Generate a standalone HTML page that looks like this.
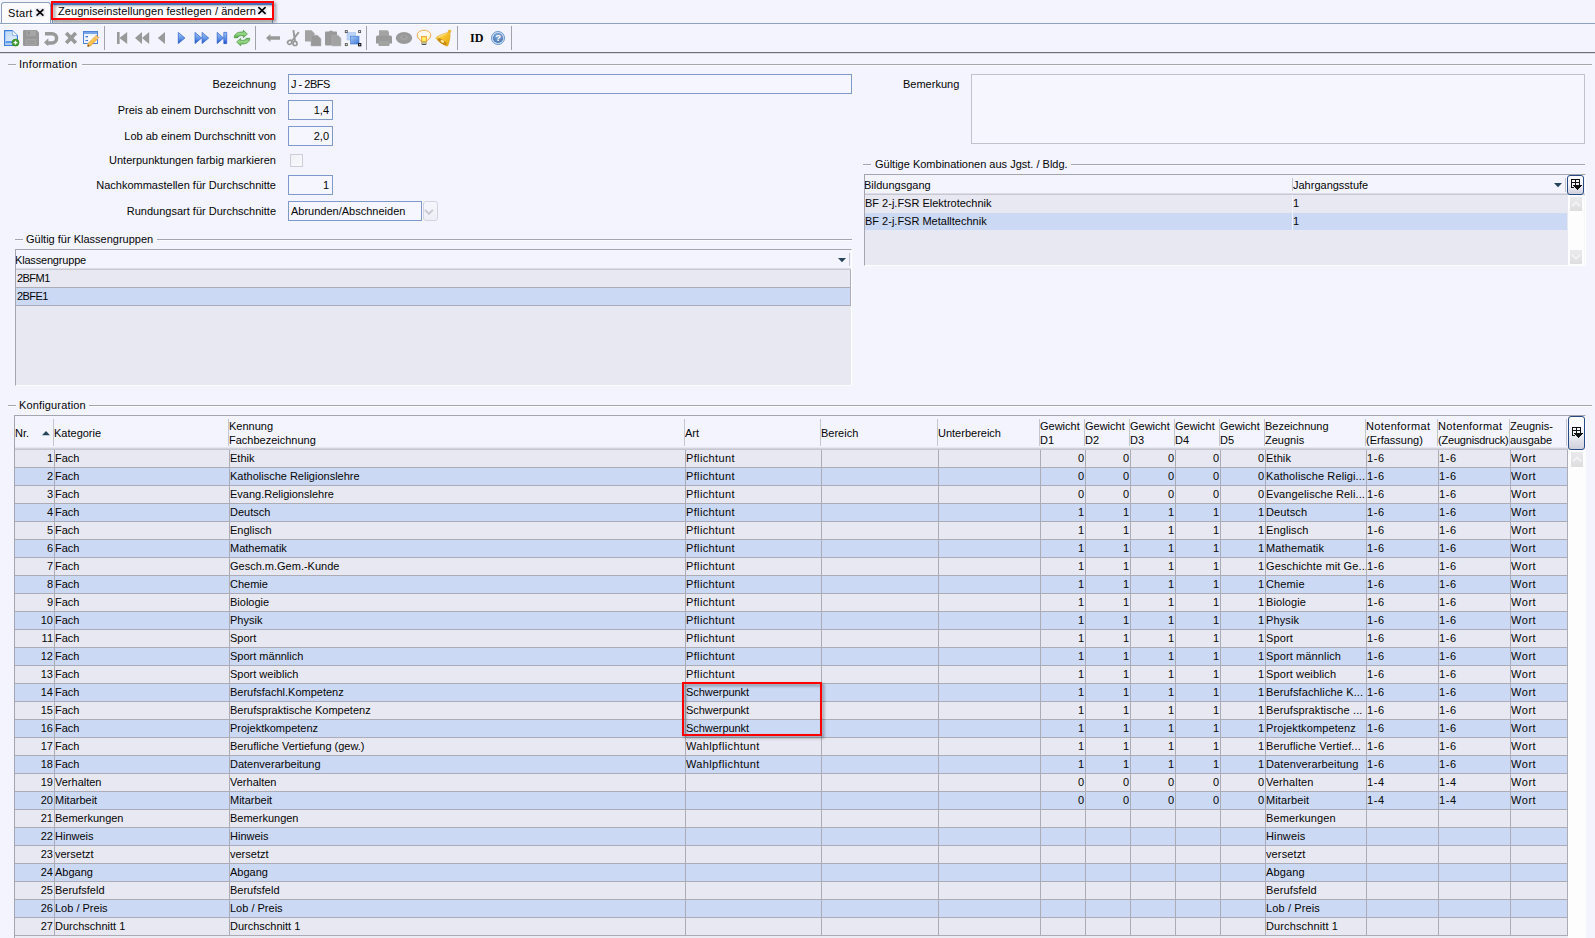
<!DOCTYPE html>
<html><head><meta charset="utf-8"><title>Zeugniseinstellungen</title>
<style>
*{box-sizing:border-box;margin:0;padding:0}
html,body{width:1595px;height:938px;overflow:hidden}
body{background:#f3f4fe;font-family:"Liberation Sans",sans-serif;font-size:11px;color:#050505;position:relative}
i{font-style:normal}
u{text-decoration:none;letter-spacing:.35px}
s{text-decoration:none;letter-spacing:-.2px}
.abs{position:absolute}
.t{position:absolute;white-space:nowrap;line-height:13px;height:13px}
.lbl{position:absolute;white-space:nowrap;line-height:13px;height:13px;text-align:right;right:1319px}
.hl{position:absolute;height:1px;background:#a4a5ae;box-shadow:0 1px 0 #fbfbff}
.inp{position:absolute;border:1px solid #7f99c8;background:#f5f6ff;height:20px;line-height:19px;padding:0 2px;white-space:nowrap}
.inp.ra{text-align:right;padding-right:3px}
/* grids */
.grid{position:absolute;background:#e8e8f2;border-left:1px solid #a4a5ae;border-top:1px solid #a4a5ae;border-right:1px solid #fdfdff;border-bottom:1px solid #fdfdff;overflow:hidden}
.r{position:absolute;left:0;height:18px;width:1552px;border-bottom:1px solid #acacb6}
.r.g{background:#e8e8f2}
.r.b{background:#ccd9f5}
.c{position:absolute;top:0;height:17px;line-height:16px;padding-left:0;border-left:1px solid #acacb6;white-space:nowrap;overflow:hidden}
.c:first-child{border-left:none}
.c.n{text-align:right;padding-right:1px;padding-left:0}
.hdr{position:absolute;left:0;top:0;background:#f3f4fe}
.h{position:absolute;top:0;height:33px;line-height:35px;padding-left:1px;white-space:nowrap;overflow:hidden}
.h.two{line-height:14px;padding-top:3px}
.h:before{content:"";position:absolute;left:0;top:3px;bottom:3px;width:1px;background:#c4c6d0}
.h:first-child:before{display:none}
.cbtn{position:absolute;width:17px;border:1px solid #274a85;border-radius:3px;background:linear-gradient(#ffffff 0,#f4f4fa 45%,#d0d0dc 100%)}
.sbt{position:absolute;width:12px;background:linear-gradient(#eaeaee,#dededf)}
.trk{position:absolute;background:#fdfdfe}
</style></head><body>

<!-- TABS -->
<div class="abs" style="left:0;top:23px;width:1595px;height:1px;background:#8fa3c3"></div>
<div class="abs" style="left:0;top:24px;width:520px;height:1px;background:#fcfcff"></div>
<div class="abs" style="left:1px;top:2px;width:50px;height:21px;border:1px solid #8c9fbd;border-bottom:none;border-radius:3px 3px 0 0;background:#fbfbff"></div>
<div class="t" style="left:8px;top:7px;letter-spacing:.3px">Start</div>
<svg class="abs" style="left:35px;top:8px" width="10" height="9" viewBox="0 0 10 9"><rect x="0" y="0" width="10" height="9" fill="#ececf4"/><path d="M1.6 1.4L8.4 7.6M8.4 1.4L1.6 7.6" stroke="#050505" stroke-width="1.7"/></svg>
<!-- active tab -->
<div class="abs" style="left:52px;top:3px;width:221px;height:20px;border-left:1px solid #8098b8;border-right:1px solid #8098b8;background:linear-gradient(#5c8ff0 0,#5c8ff0 2px,#dedee0 2px,#efeff1 3px,#f9f9fb 4px,#fdfdff 6px,#fdfdff 16px,#e2e8e8 17px,#e4e6e6 20px)"></div>
<div class="abs" style="left:51px;top:1px;width:223px;height:19px;border:2px solid #ff0000;filter:drop-shadow(2px 2px 1.5px rgba(0,0,0,.45))"></div>
<div class="t" style="left:58px;top:5px;letter-spacing:.07px">Zeugniseinstellungen festlegen / ändern</div>
<svg class="abs" style="left:257px;top:6px" width="10" height="9" viewBox="0 0 10 9"><rect x="0" y="0" width="10" height="9" fill="#f0f0f6"/><path d="M1.4 1.2L8.6 7.8M8.6 1.2L1.4 7.8" stroke="#050505" stroke-width="1.7"/></svg>

<!-- TOOLBAR -->
<div class="abs" style="left:0;top:52px;width:1595px;height:1px;background:#6e6e74"></div>
<div class="abs" style="left:0;top:53px;width:1595px;height:1px;background:#d9dae4"></div>
<!--TB--><svg class="abs" style="left:0;top:24px" width="530" height="28" viewBox="0 24 530 28">
<defs>
<linearGradient id="gb" x1="0" y1="0" x2="0" y2="1"><stop offset="0" stop-color="#a8c8f4"/><stop offset=".6" stop-color="#5a90e4"/><stop offset="1" stop-color="#1a44c0"/></linearGradient>
<linearGradient id="gdoc" x1="0" y1="0" x2="1" y2="1"><stop offset="0" stop-color="#b9d6f7"/><stop offset="1" stop-color="#f2f7fe"/></linearGradient>
<linearGradient id="ggr" x1="0" y1="0" x2="0" y2="1"><stop offset="0" stop-color="#6ab85a"/><stop offset=".5" stop-color="#9ad88c"/><stop offset="1" stop-color="#4aa03c"/></linearGradient>
<linearGradient id="gsq" x1="0" y1="0" x2="1" y2="1"><stop offset="0" stop-color="#a9c8f5"/><stop offset="1" stop-color="#3f78d8"/></linearGradient>
<radialGradient id="gbulb" cx=".5" cy=".35" r=".65"><stop offset="0" stop-color="#ffffff"/><stop offset=".6" stop-color="#fffbe0"/><stop offset="1" stop-color="#ffe9a8"/></radialGradient>
<linearGradient id="gbell" x1="0" y1="0" x2="1" y2="1"><stop offset="0" stop-color="#ffe27a"/><stop offset=".5" stop-color="#f6c02a"/><stop offset="1" stop-color="#e0a010"/></linearGradient>
<radialGradient id="ghelp" cx=".5" cy=".3" r=".75"><stop offset="0" stop-color="#8eb0da"/><stop offset="1" stop-color="#416fae"/></radialGradient>
<linearGradient id="gpen" x1="0" y1="0" x2="1" y2="1"><stop offset="0" stop-color="#ffe680"/><stop offset="1" stop-color="#f0a020"/></linearGradient>
</defs>
<!-- separators -->
<g fill="#a2a2aa"><rect x="104" y="26" width="1" height="24"/><rect x="255" y="26" width="1" height="24"/><rect x="366" y="26" width="1" height="24"/><rect x="457" y="26" width="1" height="24"/><rect x="511" y="26" width="1" height="24"/></g>
<!-- 1 new doc -->
<path d="M4.6 30.6H12.4L17.4 35.6V45.4H4.6Z" fill="url(#gdoc)" stroke="#3d7fdb" stroke-width="1.2" stroke-linejoin="round"/>
<path d="M12.4 30.6V35.6H17.4" fill="#fff" stroke="#6f9fe6" stroke-width=".7"/>
<rect x="5.6" y="41" width="10" height="2.4" fill="#5a9ae6"/>
<circle cx="15.5" cy="42.6" r="3.5" fill="#46a030" stroke="#2f7a20" stroke-width=".6"/>
<path d="M13.6 42.6H17.4M15.5 40.7V44.5" stroke="#fff" stroke-width="1.3"/>
<!-- 2 save -->
<path d="M24 30H36.5L39 32.5V45Q39 46 38 46H24Q23 46 23 45V31Q23 30 24 30Z" fill="#979797"/>
<rect x="26.5" y="30.5" width="9.5" height="5.5" fill="#a6a6a6"/><rect x="28.3" y="31.5" width="1.2" height="3.2" fill="#858585"/>
<rect x="25.5" y="39" width="11" height="6.5" fill="#a3a3a3"/><path d="M27 41.2H35M27 43.4H35" stroke="#939393" stroke-width=".8"/>
<!-- 3 undo -->
<path d="M45 33.7H52A4.5 4.5 0 0 1 52 42.9H47.5" fill="none" stroke="#999" stroke-width="3.5"/>
<path d="M44 42.6L48.3 38.2V46.2Z" fill="#999"/>
<!-- 4 X -->
<path d="M66.2 32.9L75.8 43M75.8 32.9L66.2 43" stroke="#999" stroke-width="3.7"/>
<!-- 5 form edit -->
<rect x="83.5" y="31.5" width="14" height="12" fill="#eef2fb" stroke="#4f84d6"/>
<rect x="84" y="32" width="13" height="2" fill="#79a6e8"/>
<rect x="88.5" y="36" width="8" height="6.5" fill="#fff"/>
<path d="M85.5 36.7H88M85.5 40.5H88" stroke="#3f78d8" stroke-width="1.2"/>
<path d="M96.3 35.2L98.8 37.7L90.7 45.8L87.6 46.4L88.2 43.3Z" fill="url(#gpen)" stroke="#d98a20" stroke-width=".6"/>
<path d="M87.6 46.4L88 44.6L89.4 46Z" fill="#5a3a10"/>
<path d="M95.2 36.3L97.7 38.8" stroke="#f6c9a0" stroke-width="1.2"/>
<!-- nav -->
<g fill="#999"><rect x="117" y="32" width="2.6" height="12"/><path d="M127.2 32V44L119.4 38Z"/>
<path d="M142 32V44L135 38Z"/><path d="M149.2 32V44L142 38Z"/>
<path d="M165 32V44L157.8 38Z"/></g>
<g fill="url(#gb)" stroke="#2a5fd0" stroke-width=".7" stroke-linejoin="round"><path d="M178.3 32.4V43.6L184.9 38Z"/>
<path d="M195 32.4V43.6L201.6 38Z"/><path d="M202.1 32.4V43.6L208.7 38Z"/>
<path d="M217.2 32.4V43.6L223.6 38Z"/><rect x="223.8" y="32.4" width="2.9" height="11.2"/></g>
<!-- refresh -->
<path d="M234.2 37.7C234.2 33.5 238 31.7 243.3 31.9L243.3 30.2L247.4 34L243.3 37.8L243.3 35.7C240 35.5 238.2 36.1 237.8 37.7Z" fill="url(#ggr)" stroke="#3a8c30" stroke-width=".6" stroke-linejoin="round"/>
<path d="M249.8 38.3C249.8 42.5 246 44.3 240.7 44.1L240.7 45.8L236.6 42L240.7 38.2L240.7 40.3C244 40.5 245.8 39.9 246.2 38.3Z" fill="url(#ggr)" stroke="#3a8c30" stroke-width=".6" stroke-linejoin="round"/>
<!-- left arrow -->
<path d="M266 38L270.4 34V36.2H280V39.8H270.4V42Z" fill="#999"/>
<!-- scissors -->
<path d="M293.4 30.2L295 41M298.8 32.2L291.5 41.5" stroke="#999" stroke-width="1.9" fill="none"/>
<ellipse cx="289.7" cy="42.3" rx="2.2" ry="1.9" fill="none" stroke="#999" stroke-width="1.7" transform="rotate(-30 289.7 42.3)"/>
<ellipse cx="295" cy="43.4" rx="2" ry="2.1" fill="none" stroke="#999" stroke-width="1.7"/>
<!-- copy -->
<path d="M305 30.3H311.5L314.5 33.3V41.5H305Z" fill="#a2a2a2"/>
<path d="M311 35.2H317.5L321 38.7V46H311Z" fill="#999" stroke="#b0b0b0" stroke-width=".5"/>
<!-- paste -->
<path d="M326 31.5H329Q330.8 29.5 333 31.5H336Q337 31.5 337 32.5V44.5Q337 45.5 336 45.5H326Q325 45.5 325 44.5V32.5Q325 31.5 326 31.5Z" fill="#999"/>
<path d="M332 35.2H338L341 38.2V46H332Z" fill="#a2a2a2" stroke="#b4b4b4" stroke-width=".5"/>
<!-- select all -->
<rect x="347" y="32.5" width="8.5" height="7.5" fill="#bcd3f7" stroke="#a5c2f0" stroke-width=".6"/>
<rect x="350.5" y="36.2" width="8.5" height="7.8" fill="url(#gsq)" stroke="#3f78d8" stroke-width=".6"/>
<g fill="#f3f4fe" stroke="#555" stroke-width=".9"><rect x="345.3" y="30.6" width="2" height="2"/><rect x="358.6" y="30.6" width="2" height="2"/><rect x="345.3" y="43.6" width="2" height="2"/></g>
<rect x="358.6" y="43.6" width="2.2" height="2.2" fill="#fff" stroke="#111" stroke-width="1.1"/>
<!-- printer -->
<path d="M379 30.3H387.5L389 32V36H379Z" fill="#a4a4a4"/>
<path d="M377.5 35.5H390.5Q392 35.5 392 37.5V43.5H376V37.5Q376 35.5 377.5 35.5Z" fill="#999"/>
<rect x="378.5" y="41" width="11" height="5" rx=".8" fill="#a2a2a2"/>
<!-- ellipse -->
<ellipse cx="404" cy="38" rx="8.2" ry="6" fill="#999"/><ellipse cx="404" cy="37.6" rx="4" ry="2.6" fill="#a3a3a3"/><circle cx="404" cy="37" r=".9" fill="#8a8a8a"/>
<!-- bulb -->
<path d="M421 41.2C420.6 39.8 417.2 38.7 417.2 35.3C417.2 32.2 420.2 30.3 424 30.3C427.8 30.3 430.8 32.2 430.8 35.3C430.8 38.7 427.4 39.8 427 41.2Z" fill="url(#gbulb)" stroke="#eda048" stroke-width=".9"/>
<rect x="421.6" y="36.6" width="4.8" height="4.8" fill="#ffde40" stroke="#f08c28" stroke-width=".7"/>
<rect x="422.6" y="37.6" width="2.8" height="3.4" fill="#fff06a"/>
<path d="M421.3 41.6H426.7V43.6Q426.7 45 424 45Q421.3 45 421.3 43.6Z" fill="#8e8e8e"/>
<rect x="421.3" y="41.6" width="5.4" height="1" fill="#f4d23a"/>
<rect x="422.2" y="43" width="3.6" height=".8" fill="#e6e6e6"/>
<path d="M421.8 44.4H426.2" stroke="#3a3a3a" stroke-width=".9"/>
<!-- bell -->
<path d="M448.7 32.4C446 32.6 440.5 34.6 437.2 36.6C435.8 37.4 435.7 38.4 436.6 39.2L440.5 42.6L445.8 45.8C447 46.4 448 46 448.3 44.8C449.2 41.6 450.6 36.5 450 33.4Z" fill="url(#gbell)" stroke="#d89a12" stroke-width=".5"/>
<circle cx="449.6" cy="31.4" r="1.35" fill="#f4bc24" stroke="#d89a12" stroke-width=".5"/>
<ellipse cx="442" cy="41.6" rx="5.4" ry="1.9" transform="rotate(36 442 41.6)" fill="#c98c12"/>
<ellipse cx="442.4" cy="41.3" rx="1.9" ry="1.2" transform="rotate(36 442.4 41.3)" fill="#ffe8a0"/>
<path d="M438.5 36.8L446.5 33.4" stroke="#fff3b8" stroke-width=".8" opacity=".8"/>
<!-- ID -->
<text x="470" y="42.3" font-family="Liberation Serif" font-weight="bold" font-size="12.5" fill="#050505" textLength="13.5" lengthAdjust="spacingAndGlyphs">ID</text>
<!-- help -->
<circle cx="498" cy="38" r="6.5" fill="#cfe0f6" stroke="#6a96d0" stroke-width="1"/>
<circle cx="498" cy="38" r="5.1" fill="url(#ghelp)"/>
<text x="498.1" y="41.3" font-family="Liberation Sans" font-weight="bold" font-size="9.6" fill="#fff" text-anchor="middle">?</text>
</svg>
<!--/TB-->

<!-- INFORMATION group -->
<div class="hl" style="left:8px;top:64px;width:8px"></div>
<div class="t" style="left:19px;top:58px;letter-spacing:.3px">Information</div>
<div class="hl" style="left:82px;top:64px;width:1510px"></div>

<div class="lbl" style="top:78px">Bezeichnung</div>
<div class="inp" style="left:288px;top:74px;width:564px;letter-spacing:-.5px">J - 2BFS</div>
<div class="lbl" style="top:104px">Preis ab einem Durchschnitt von</div>
<div class="inp ra" style="left:288px;top:100px;width:45px">1,4</div>
<div class="lbl" style="top:130px">Lob ab einem Durchschnitt von</div>
<div class="inp ra" style="left:288px;top:126px;width:45px">2,0</div>
<div class="lbl" style="top:154px">Unterpunktungen farbig markieren</div>
<div class="abs" style="left:290px;top:154px;width:13px;height:13px;border:1px solid #cdced8;background:linear-gradient(135deg,#f1f1f5,#f9f9fd)"></div>
<div class="lbl" style="top:179px">Nachkommastellen für Durchschnitte</div>
<div class="inp ra" style="left:288px;top:175px;width:45px">1</div>
<div class="lbl" style="top:205px">Rundungsart für Durchschnitte</div>
<div class="inp" style="left:288px;top:201px;width:134px">Abrunden/Abschneiden</div>
<div class="abs" style="left:423px;top:201px;width:15px;height:20px;border:1px solid #d3d4df;border-radius:3px;background:linear-gradient(#f6f6fc,#eeeef6)"></div>
<svg class="abs" style="left:424px;top:209px" width="10" height="7" viewBox="0 0 10 7"><path d="M.9 .9L4.9 5L8.9 .9" stroke="#c6c8d2" stroke-width="1.9" fill="none"/></svg>

<!-- Bemerkung -->
<div class="t" style="left:903px;top:78px">Bemerkung</div>
<div class="abs" style="left:971px;top:74px;width:614px;height:70px;border:1px solid #c0c2cd;background:#f5f6ff"></div>

<!-- Gültig für Klassengruppen -->
<div class="hl" style="left:15px;top:239px;width:8px"></div>
<div class="t" style="left:26px;top:233px">Gültig für Klassengruppen</div>
<div class="hl" style="left:157px;top:239px;width:695px"></div>
<div class="grid" style="left:15px;top:249px;width:837px;height:137px">
  <div class="hdr" style="width:836px;height:20px;background:linear-gradient(#f3f4fe 0,#f3f4fe 18px,#dcdce6 18px,#dcdce6 19px,#c8c8d2 19px,#c8c8d2 20px)"><i class="h" style="left:-1px;width:300px;height:18px;line-height:21px;padding-left:0;letter-spacing:-.18px">Klassengruppe</i></div>
  <div class="r g" style="top:20px;width:835px;border-right:1px solid #acacb6"><i class="c" style="left:0;width:300px;padding-left:1px;letter-spacing:-.55px">2BFM1</i></div>
  <div class="r b" style="top:38px;width:835px;border-right:1px solid #acacb6"><i class="c" style="left:0;width:300px;padding-left:1px;letter-spacing:-.55px">2BFE1</i></div>
</div>
<svg class="abs" style="left:838px;top:258px" width="8" height="5" viewBox="0 0 8 5"><path d="M0 0H8L4 4.3Z" fill="#27455a"/></svg>
<div class="abs" style="left:849px;top:253px;width:1px;height:13px;background:#c4c6d0"></div>

<!-- Gültige Kombinationen -->
<div class="hl" style="left:863px;top:164px;width:8px"></div>
<div class="t" style="left:875px;top:158px">Gültige Kombinationen aus Jgst. / Bldg.</div>
<div class="hl" style="left:1071px;top:164px;width:514px"></div>
<div class="grid" style="left:864px;top:174px;width:722px;height:92px">
  <div class="hdr" style="width:721px;height:20px;background:linear-gradient(#f3f4fe 0,#f3f4fe 18px,#dcdce6 18px,#dcdce6 19px,#c8c8d2 19px,#c8c8d2 20px)">
    <i class="h" style="left:-1px;width:427px;height:19px;line-height:20px;padding-left:0">Bildungsgang</i>
    <i class="h" style="left:427px;width:270px;height:19px;line-height:20px;padding-left:1px">Jahrgangsstufe</i>
  </div>
  <div class="r g" style="top:20px;width:702px;border-bottom-color:#e8e8f2"><i class="c" style="left:0;width:427px;border:none">BF 2-j.FSR Elektrotechnik</i><i class="c" style="left:427px;width:275px;border-left-color:#f3f4fe">1</i></div>
  <div class="r b" style="top:38px;width:702px;border-bottom-color:#e8e8f2"><i class="c" style="left:0;width:427px;border:none">BF 2-j.FSR Metalltechnik</i><i class="c" style="left:427px;width:275px;border-left-color:#f3f4fe">1</i></div>
  <div class="abs" style="left:703px;top:21px;width:18px;height:70px;background:#f6f6fc"></div>
</div>
<svg class="abs" style="left:1554px;top:183px" width="8" height="5" viewBox="0 0 8 5"><path d="M0 0H8L4 4.3Z" fill="#27455a"/></svg>
<div class="abs" style="left:1565px;top:178px;width:1px;height:14px;background:#c4c6d0"></div>
<div class="trk" style="left:1568px;top:195px;width:16px;height:70px"></div><div class="cbtn" style="left:1567px;top:175px;height:20px"></div><svg class="abs" style="left:1571px;top:179px" width="11" height="11" viewBox="0 0 11 11" shape-rendering="crispEdges"><g fill="#111"><rect x="0" y="0" width="9" height="1"/><rect x="0" y="0" width="1" height="9"/><rect x="8" y="0" width="1" height="6"/><rect x="0" y="3" width="9" height="1"/><rect x="4" y="0" width="1" height="6"/><rect x="0" y="8" width="3" height="1"/><rect x="2" y="6" width="9" height="1"/><rect x="3" y="7" width="7" height="1"/><rect x="4" y="8" width="5" height="1"/><rect x="5" y="9" width="3" height="1"/><rect x="6" y="10" width="1" height="1"/></g></svg><div class="sbt" style="left:1570px;top:197px;height:14px"></div><svg class="abs" style="left:1571px;top:201px" width="10" height="6" viewBox="0 0 10 6"><path d="M1 5.2L5 1.4L9 5.2" fill="none" stroke="#f4f4f6" stroke-width="1.8"/></svg><div class="sbt" style="left:1570px;top:250px;height:14px"></div><svg class="abs" style="left:1571px;top:254px" width="10" height="6" viewBox="0 0 10 6"><path d="M1 .8L5 4.6L9 .8" fill="none" stroke="#f4f4f6" stroke-width="1.8"/></svg>

<!-- KONFIGURATION -->
<div class="hl" style="left:8px;top:405px;width:8px"></div>
<div class="t" style="left:19px;top:399px;letter-spacing:.15px">Konfiguration</div>
<div class="hl" style="left:89px;top:405px;width:1503px"></div>
<div class="grid" style="left:14px;top:415px;width:1572px;height:530px">
  <div class="hdr" style="width:1553px;height:34px;border-bottom:none;background:linear-gradient(#f3f4fe 0,#f3f4fe 31px,#e6e6f0 31px,#e6e6f0 32px,#d2d2dc 32px,#d2d2dc 33px,#c6c6d0 33px,#c6c6d0 34px)"><i class="h" style="left:0px;width:38px;padding-left:0">Nr.</i><i class="h" style="left:38px;width:175px">Kategorie</i><i class="h two" style="left:213px;width:456px">Kennung<br>Fachbezeichnung</i><i class="h" style="left:669px;width:136px">Art</i><i class="h" style="left:805px;width:117px">Bereich</i><i class="h" style="left:922px;width:102px">Unterbereich</i><i class="h two" style="left:1024px;width:45px">Gewicht<br>D1</i><i class="h two" style="left:1069px;width:45px">Gewicht<br>D2</i><i class="h two" style="left:1114px;width:45px">Gewicht<br>D3</i><i class="h two" style="left:1159px;width:45px">Gewicht<br>D4</i><i class="h two" style="left:1204px;width:45px">Gewicht<br>D5</i><i class="h two" style="left:1249px;width:101px">Bezeichnung<br>Zeugnis</i><i class="h two" style="left:1350px;width:72px"><u>Notenformat</u><br>(Erfassung)</i><i class="h two" style="left:1422px;width:72px"><u>Notenformat</u><br><s>(Zeugnisdruck)</s></i><i class="h two" style="left:1494px;width:57px">Zeugnis-<br>ausgabe</i></div>
  <div class="abs" style="left:1554px;top:0;width:18px;height:530px;background:#f6f6fc"></div>
</div>
<div class="abs" style="left:15px;top:0;width:1552px;height:938px;overflow:hidden;pointer-events:none">
<div class="r g" style="top:450px"><i class="c n" style="left:0px;width:39px">1</i><i class="c" style="left:39px;width:175px">Fach</i><i class="c" style="left:214px;width:456px">Ethik</i><i class="c" style="left:670px;width:136px;letter-spacing:0.36px">Pflichtunt</i><i class="c" style="left:806px;width:117px"></i><i class="c" style="left:923px;width:102px"></i><i class="c n" style="left:1025px;width:45px">0</i><i class="c n" style="left:1070px;width:45px">0</i><i class="c n" style="left:1115px;width:45px">0</i><i class="c n" style="left:1160px;width:45px">0</i><i class="c n" style="left:1205px;width:45px">0</i><i class="c" style="left:1250px;width:101px;letter-spacing:0.12px">Ethik</i><i class="c" style="left:1351px;width:72px;letter-spacing:0.55px">1-6</i><i class="c" style="left:1423px;width:72px;letter-spacing:0.55px">1-6</i><i class="c" style="left:1495px;width:57px;letter-spacing:0.55px">Wort</i></div>
<div class="r b" style="top:468px"><i class="c n" style="left:0px;width:39px">2</i><i class="c" style="left:39px;width:175px">Fach</i><i class="c" style="left:214px;width:456px">Katholische Religionslehre</i><i class="c" style="left:670px;width:136px;letter-spacing:0.36px">Pflichtunt</i><i class="c" style="left:806px;width:117px"></i><i class="c" style="left:923px;width:102px"></i><i class="c n" style="left:1025px;width:45px">0</i><i class="c n" style="left:1070px;width:45px">0</i><i class="c n" style="left:1115px;width:45px">0</i><i class="c n" style="left:1160px;width:45px">0</i><i class="c n" style="left:1205px;width:45px">0</i><i class="c" style="left:1250px;width:101px;letter-spacing:0.12px">Katholische Religi...</i><i class="c" style="left:1351px;width:72px;letter-spacing:0.55px">1-6</i><i class="c" style="left:1423px;width:72px;letter-spacing:0.55px">1-6</i><i class="c" style="left:1495px;width:57px;letter-spacing:0.55px">Wort</i></div>
<div class="r g" style="top:486px"><i class="c n" style="left:0px;width:39px">3</i><i class="c" style="left:39px;width:175px">Fach</i><i class="c" style="left:214px;width:456px">Evang.Religionslehre</i><i class="c" style="left:670px;width:136px;letter-spacing:0.36px">Pflichtunt</i><i class="c" style="left:806px;width:117px"></i><i class="c" style="left:923px;width:102px"></i><i class="c n" style="left:1025px;width:45px">0</i><i class="c n" style="left:1070px;width:45px">0</i><i class="c n" style="left:1115px;width:45px">0</i><i class="c n" style="left:1160px;width:45px">0</i><i class="c n" style="left:1205px;width:45px">0</i><i class="c" style="left:1250px;width:101px;letter-spacing:0.12px">Evangelische Reli...</i><i class="c" style="left:1351px;width:72px;letter-spacing:0.55px">1-6</i><i class="c" style="left:1423px;width:72px;letter-spacing:0.55px">1-6</i><i class="c" style="left:1495px;width:57px;letter-spacing:0.55px">Wort</i></div>
<div class="r b" style="top:504px"><i class="c n" style="left:0px;width:39px">4</i><i class="c" style="left:39px;width:175px">Fach</i><i class="c" style="left:214px;width:456px">Deutsch</i><i class="c" style="left:670px;width:136px;letter-spacing:0.36px">Pflichtunt</i><i class="c" style="left:806px;width:117px"></i><i class="c" style="left:923px;width:102px"></i><i class="c n" style="left:1025px;width:45px">1</i><i class="c n" style="left:1070px;width:45px">1</i><i class="c n" style="left:1115px;width:45px">1</i><i class="c n" style="left:1160px;width:45px">1</i><i class="c n" style="left:1205px;width:45px">1</i><i class="c" style="left:1250px;width:101px;letter-spacing:0.12px">Deutsch</i><i class="c" style="left:1351px;width:72px;letter-spacing:0.55px">1-6</i><i class="c" style="left:1423px;width:72px;letter-spacing:0.55px">1-6</i><i class="c" style="left:1495px;width:57px;letter-spacing:0.55px">Wort</i></div>
<div class="r g" style="top:522px"><i class="c n" style="left:0px;width:39px">5</i><i class="c" style="left:39px;width:175px">Fach</i><i class="c" style="left:214px;width:456px">Englisch</i><i class="c" style="left:670px;width:136px;letter-spacing:0.36px">Pflichtunt</i><i class="c" style="left:806px;width:117px"></i><i class="c" style="left:923px;width:102px"></i><i class="c n" style="left:1025px;width:45px">1</i><i class="c n" style="left:1070px;width:45px">1</i><i class="c n" style="left:1115px;width:45px">1</i><i class="c n" style="left:1160px;width:45px">1</i><i class="c n" style="left:1205px;width:45px">1</i><i class="c" style="left:1250px;width:101px;letter-spacing:0.12px">Englisch</i><i class="c" style="left:1351px;width:72px;letter-spacing:0.55px">1-6</i><i class="c" style="left:1423px;width:72px;letter-spacing:0.55px">1-6</i><i class="c" style="left:1495px;width:57px;letter-spacing:0.55px">Wort</i></div>
<div class="r b" style="top:540px"><i class="c n" style="left:0px;width:39px">6</i><i class="c" style="left:39px;width:175px">Fach</i><i class="c" style="left:214px;width:456px">Mathematik</i><i class="c" style="left:670px;width:136px;letter-spacing:0.36px">Pflichtunt</i><i class="c" style="left:806px;width:117px"></i><i class="c" style="left:923px;width:102px"></i><i class="c n" style="left:1025px;width:45px">1</i><i class="c n" style="left:1070px;width:45px">1</i><i class="c n" style="left:1115px;width:45px">1</i><i class="c n" style="left:1160px;width:45px">1</i><i class="c n" style="left:1205px;width:45px">1</i><i class="c" style="left:1250px;width:101px;letter-spacing:0.12px">Mathematik</i><i class="c" style="left:1351px;width:72px;letter-spacing:0.55px">1-6</i><i class="c" style="left:1423px;width:72px;letter-spacing:0.55px">1-6</i><i class="c" style="left:1495px;width:57px;letter-spacing:0.55px">Wort</i></div>
<div class="r g" style="top:558px"><i class="c n" style="left:0px;width:39px">7</i><i class="c" style="left:39px;width:175px">Fach</i><i class="c" style="left:214px;width:456px">Gesch.m.Gem.-Kunde</i><i class="c" style="left:670px;width:136px;letter-spacing:0.36px">Pflichtunt</i><i class="c" style="left:806px;width:117px"></i><i class="c" style="left:923px;width:102px"></i><i class="c n" style="left:1025px;width:45px">1</i><i class="c n" style="left:1070px;width:45px">1</i><i class="c n" style="left:1115px;width:45px">1</i><i class="c n" style="left:1160px;width:45px">1</i><i class="c n" style="left:1205px;width:45px">1</i><i class="c" style="left:1250px;width:101px;letter-spacing:0.12px">Geschichte mit Ge...</i><i class="c" style="left:1351px;width:72px;letter-spacing:0.55px">1-6</i><i class="c" style="left:1423px;width:72px;letter-spacing:0.55px">1-6</i><i class="c" style="left:1495px;width:57px;letter-spacing:0.55px">Wort</i></div>
<div class="r b" style="top:576px"><i class="c n" style="left:0px;width:39px">8</i><i class="c" style="left:39px;width:175px">Fach</i><i class="c" style="left:214px;width:456px">Chemie</i><i class="c" style="left:670px;width:136px;letter-spacing:0.36px">Pflichtunt</i><i class="c" style="left:806px;width:117px"></i><i class="c" style="left:923px;width:102px"></i><i class="c n" style="left:1025px;width:45px">1</i><i class="c n" style="left:1070px;width:45px">1</i><i class="c n" style="left:1115px;width:45px">1</i><i class="c n" style="left:1160px;width:45px">1</i><i class="c n" style="left:1205px;width:45px">1</i><i class="c" style="left:1250px;width:101px;letter-spacing:0.12px">Chemie</i><i class="c" style="left:1351px;width:72px;letter-spacing:0.55px">1-6</i><i class="c" style="left:1423px;width:72px;letter-spacing:0.55px">1-6</i><i class="c" style="left:1495px;width:57px;letter-spacing:0.55px">Wort</i></div>
<div class="r g" style="top:594px"><i class="c n" style="left:0px;width:39px">9</i><i class="c" style="left:39px;width:175px">Fach</i><i class="c" style="left:214px;width:456px">Biologie</i><i class="c" style="left:670px;width:136px;letter-spacing:0.36px">Pflichtunt</i><i class="c" style="left:806px;width:117px"></i><i class="c" style="left:923px;width:102px"></i><i class="c n" style="left:1025px;width:45px">1</i><i class="c n" style="left:1070px;width:45px">1</i><i class="c n" style="left:1115px;width:45px">1</i><i class="c n" style="left:1160px;width:45px">1</i><i class="c n" style="left:1205px;width:45px">1</i><i class="c" style="left:1250px;width:101px;letter-spacing:0.12px">Biologie</i><i class="c" style="left:1351px;width:72px;letter-spacing:0.55px">1-6</i><i class="c" style="left:1423px;width:72px;letter-spacing:0.55px">1-6</i><i class="c" style="left:1495px;width:57px;letter-spacing:0.55px">Wort</i></div>
<div class="r b" style="top:612px"><i class="c n" style="left:0px;width:39px">10</i><i class="c" style="left:39px;width:175px">Fach</i><i class="c" style="left:214px;width:456px">Physik</i><i class="c" style="left:670px;width:136px;letter-spacing:0.36px">Pflichtunt</i><i class="c" style="left:806px;width:117px"></i><i class="c" style="left:923px;width:102px"></i><i class="c n" style="left:1025px;width:45px">1</i><i class="c n" style="left:1070px;width:45px">1</i><i class="c n" style="left:1115px;width:45px">1</i><i class="c n" style="left:1160px;width:45px">1</i><i class="c n" style="left:1205px;width:45px">1</i><i class="c" style="left:1250px;width:101px;letter-spacing:0.12px">Physik</i><i class="c" style="left:1351px;width:72px;letter-spacing:0.55px">1-6</i><i class="c" style="left:1423px;width:72px;letter-spacing:0.55px">1-6</i><i class="c" style="left:1495px;width:57px;letter-spacing:0.55px">Wort</i></div>
<div class="r g" style="top:630px"><i class="c n" style="left:0px;width:39px">11</i><i class="c" style="left:39px;width:175px">Fach</i><i class="c" style="left:214px;width:456px">Sport</i><i class="c" style="left:670px;width:136px;letter-spacing:0.36px">Pflichtunt</i><i class="c" style="left:806px;width:117px"></i><i class="c" style="left:923px;width:102px"></i><i class="c n" style="left:1025px;width:45px">1</i><i class="c n" style="left:1070px;width:45px">1</i><i class="c n" style="left:1115px;width:45px">1</i><i class="c n" style="left:1160px;width:45px">1</i><i class="c n" style="left:1205px;width:45px">1</i><i class="c" style="left:1250px;width:101px;letter-spacing:0.12px">Sport</i><i class="c" style="left:1351px;width:72px;letter-spacing:0.55px">1-6</i><i class="c" style="left:1423px;width:72px;letter-spacing:0.55px">1-6</i><i class="c" style="left:1495px;width:57px;letter-spacing:0.55px">Wort</i></div>
<div class="r b" style="top:648px"><i class="c n" style="left:0px;width:39px">12</i><i class="c" style="left:39px;width:175px">Fach</i><i class="c" style="left:214px;width:456px">Sport männlich</i><i class="c" style="left:670px;width:136px;letter-spacing:0.36px">Pflichtunt</i><i class="c" style="left:806px;width:117px"></i><i class="c" style="left:923px;width:102px"></i><i class="c n" style="left:1025px;width:45px">1</i><i class="c n" style="left:1070px;width:45px">1</i><i class="c n" style="left:1115px;width:45px">1</i><i class="c n" style="left:1160px;width:45px">1</i><i class="c n" style="left:1205px;width:45px">1</i><i class="c" style="left:1250px;width:101px;letter-spacing:0.12px">Sport männlich</i><i class="c" style="left:1351px;width:72px;letter-spacing:0.55px">1-6</i><i class="c" style="left:1423px;width:72px;letter-spacing:0.55px">1-6</i><i class="c" style="left:1495px;width:57px;letter-spacing:0.55px">Wort</i></div>
<div class="r g" style="top:666px"><i class="c n" style="left:0px;width:39px">13</i><i class="c" style="left:39px;width:175px">Fach</i><i class="c" style="left:214px;width:456px">Sport weiblich</i><i class="c" style="left:670px;width:136px;letter-spacing:0.36px">Pflichtunt</i><i class="c" style="left:806px;width:117px"></i><i class="c" style="left:923px;width:102px"></i><i class="c n" style="left:1025px;width:45px">1</i><i class="c n" style="left:1070px;width:45px">1</i><i class="c n" style="left:1115px;width:45px">1</i><i class="c n" style="left:1160px;width:45px">1</i><i class="c n" style="left:1205px;width:45px">1</i><i class="c" style="left:1250px;width:101px;letter-spacing:0.12px">Sport weiblich</i><i class="c" style="left:1351px;width:72px;letter-spacing:0.55px">1-6</i><i class="c" style="left:1423px;width:72px;letter-spacing:0.55px">1-6</i><i class="c" style="left:1495px;width:57px;letter-spacing:0.55px">Wort</i></div>
<div class="r b" style="top:684px"><i class="c n" style="left:0px;width:39px">14</i><i class="c" style="left:39px;width:175px">Fach</i><i class="c" style="left:214px;width:456px">Berufsfachl.Kompetenz</i><i class="c" style="left:670px;width:136px;letter-spacing:-0.05px">Schwerpunkt</i><i class="c" style="left:806px;width:117px"></i><i class="c" style="left:923px;width:102px"></i><i class="c n" style="left:1025px;width:45px">1</i><i class="c n" style="left:1070px;width:45px">1</i><i class="c n" style="left:1115px;width:45px">1</i><i class="c n" style="left:1160px;width:45px">1</i><i class="c n" style="left:1205px;width:45px">1</i><i class="c" style="left:1250px;width:101px;letter-spacing:0.12px">Berufsfachliche K...</i><i class="c" style="left:1351px;width:72px;letter-spacing:0.55px">1-6</i><i class="c" style="left:1423px;width:72px;letter-spacing:0.55px">1-6</i><i class="c" style="left:1495px;width:57px;letter-spacing:0.55px">Wort</i></div>
<div class="r g" style="top:702px"><i class="c n" style="left:0px;width:39px">15</i><i class="c" style="left:39px;width:175px">Fach</i><i class="c" style="left:214px;width:456px">Berufspraktische Kompetenz</i><i class="c" style="left:670px;width:136px;letter-spacing:-0.05px">Schwerpunkt</i><i class="c" style="left:806px;width:117px"></i><i class="c" style="left:923px;width:102px"></i><i class="c n" style="left:1025px;width:45px">1</i><i class="c n" style="left:1070px;width:45px">1</i><i class="c n" style="left:1115px;width:45px">1</i><i class="c n" style="left:1160px;width:45px">1</i><i class="c n" style="left:1205px;width:45px">1</i><i class="c" style="left:1250px;width:101px;letter-spacing:0.12px">Berufspraktische ...</i><i class="c" style="left:1351px;width:72px;letter-spacing:0.55px">1-6</i><i class="c" style="left:1423px;width:72px;letter-spacing:0.55px">1-6</i><i class="c" style="left:1495px;width:57px;letter-spacing:0.55px">Wort</i></div>
<div class="r b" style="top:720px"><i class="c n" style="left:0px;width:39px">16</i><i class="c" style="left:39px;width:175px">Fach</i><i class="c" style="left:214px;width:456px">Projektkompetenz</i><i class="c" style="left:670px;width:136px;letter-spacing:-0.05px">Schwerpunkt</i><i class="c" style="left:806px;width:117px"></i><i class="c" style="left:923px;width:102px"></i><i class="c n" style="left:1025px;width:45px">1</i><i class="c n" style="left:1070px;width:45px">1</i><i class="c n" style="left:1115px;width:45px">1</i><i class="c n" style="left:1160px;width:45px">1</i><i class="c n" style="left:1205px;width:45px">1</i><i class="c" style="left:1250px;width:101px;letter-spacing:0.12px">Projektkompetenz</i><i class="c" style="left:1351px;width:72px;letter-spacing:0.55px">1-6</i><i class="c" style="left:1423px;width:72px;letter-spacing:0.55px">1-6</i><i class="c" style="left:1495px;width:57px;letter-spacing:0.55px">Wort</i></div>
<div class="r g" style="top:738px"><i class="c n" style="left:0px;width:39px">17</i><i class="c" style="left:39px;width:175px">Fach</i><i class="c" style="left:214px;width:456px">Berufliche Vertiefung (gew.)</i><i class="c" style="left:670px;width:136px;letter-spacing:0.36px">Wahlpflichtunt</i><i class="c" style="left:806px;width:117px"></i><i class="c" style="left:923px;width:102px"></i><i class="c n" style="left:1025px;width:45px">1</i><i class="c n" style="left:1070px;width:45px">1</i><i class="c n" style="left:1115px;width:45px">1</i><i class="c n" style="left:1160px;width:45px">1</i><i class="c n" style="left:1205px;width:45px">1</i><i class="c" style="left:1250px;width:101px;letter-spacing:0.12px">Berufliche Vertief...</i><i class="c" style="left:1351px;width:72px;letter-spacing:0.55px">1-6</i><i class="c" style="left:1423px;width:72px;letter-spacing:0.55px">1-6</i><i class="c" style="left:1495px;width:57px;letter-spacing:0.55px">Wort</i></div>
<div class="r b" style="top:756px"><i class="c n" style="left:0px;width:39px">18</i><i class="c" style="left:39px;width:175px">Fach</i><i class="c" style="left:214px;width:456px">Datenverarbeitung</i><i class="c" style="left:670px;width:136px;letter-spacing:0.36px">Wahlpflichtunt</i><i class="c" style="left:806px;width:117px"></i><i class="c" style="left:923px;width:102px"></i><i class="c n" style="left:1025px;width:45px">1</i><i class="c n" style="left:1070px;width:45px">1</i><i class="c n" style="left:1115px;width:45px">1</i><i class="c n" style="left:1160px;width:45px">1</i><i class="c n" style="left:1205px;width:45px">1</i><i class="c" style="left:1250px;width:101px;letter-spacing:0.12px">Datenverarbeitung</i><i class="c" style="left:1351px;width:72px;letter-spacing:0.55px">1-6</i><i class="c" style="left:1423px;width:72px;letter-spacing:0.55px">1-6</i><i class="c" style="left:1495px;width:57px;letter-spacing:0.55px">Wort</i></div>
<div class="r g" style="top:774px"><i class="c n" style="left:0px;width:39px">19</i><i class="c" style="left:39px;width:175px">Verhalten</i><i class="c" style="left:214px;width:456px">Verhalten</i><i class="c" style="left:670px;width:136px"></i><i class="c" style="left:806px;width:117px"></i><i class="c" style="left:923px;width:102px"></i><i class="c n" style="left:1025px;width:45px">0</i><i class="c n" style="left:1070px;width:45px">0</i><i class="c n" style="left:1115px;width:45px">0</i><i class="c n" style="left:1160px;width:45px">0</i><i class="c n" style="left:1205px;width:45px">0</i><i class="c" style="left:1250px;width:101px;letter-spacing:0.12px">Verhalten</i><i class="c" style="left:1351px;width:72px;letter-spacing:0.55px">1-4</i><i class="c" style="left:1423px;width:72px;letter-spacing:0.55px">1-4</i><i class="c" style="left:1495px;width:57px;letter-spacing:0.55px">Wort</i></div>
<div class="r b" style="top:792px"><i class="c n" style="left:0px;width:39px">20</i><i class="c" style="left:39px;width:175px">Mitarbeit</i><i class="c" style="left:214px;width:456px">Mitarbeit</i><i class="c" style="left:670px;width:136px"></i><i class="c" style="left:806px;width:117px"></i><i class="c" style="left:923px;width:102px"></i><i class="c n" style="left:1025px;width:45px">0</i><i class="c n" style="left:1070px;width:45px">0</i><i class="c n" style="left:1115px;width:45px">0</i><i class="c n" style="left:1160px;width:45px">0</i><i class="c n" style="left:1205px;width:45px">0</i><i class="c" style="left:1250px;width:101px;letter-spacing:0.12px">Mitarbeit</i><i class="c" style="left:1351px;width:72px;letter-spacing:0.55px">1-4</i><i class="c" style="left:1423px;width:72px;letter-spacing:0.55px">1-4</i><i class="c" style="left:1495px;width:57px;letter-spacing:0.55px">Wort</i></div>
<div class="r g" style="top:810px"><i class="c n" style="left:0px;width:39px">21</i><i class="c" style="left:39px;width:175px">Bemerkungen</i><i class="c" style="left:214px;width:456px">Bemerkungen</i><i class="c" style="left:670px;width:136px"></i><i class="c" style="left:806px;width:117px"></i><i class="c" style="left:923px;width:102px"></i><i class="c n" style="left:1025px;width:45px"></i><i class="c n" style="left:1070px;width:45px"></i><i class="c n" style="left:1115px;width:45px"></i><i class="c n" style="left:1160px;width:45px"></i><i class="c n" style="left:1205px;width:45px"></i><i class="c" style="left:1250px;width:101px;letter-spacing:0.12px">Bemerkungen</i><i class="c" style="left:1351px;width:72px"></i><i class="c" style="left:1423px;width:72px"></i><i class="c" style="left:1495px;width:57px"></i></div>
<div class="r b" style="top:828px"><i class="c n" style="left:0px;width:39px">22</i><i class="c" style="left:39px;width:175px">Hinweis</i><i class="c" style="left:214px;width:456px">Hinweis</i><i class="c" style="left:670px;width:136px"></i><i class="c" style="left:806px;width:117px"></i><i class="c" style="left:923px;width:102px"></i><i class="c n" style="left:1025px;width:45px"></i><i class="c n" style="left:1070px;width:45px"></i><i class="c n" style="left:1115px;width:45px"></i><i class="c n" style="left:1160px;width:45px"></i><i class="c n" style="left:1205px;width:45px"></i><i class="c" style="left:1250px;width:101px;letter-spacing:0.12px">Hinweis</i><i class="c" style="left:1351px;width:72px"></i><i class="c" style="left:1423px;width:72px"></i><i class="c" style="left:1495px;width:57px"></i></div>
<div class="r g" style="top:846px"><i class="c n" style="left:0px;width:39px">23</i><i class="c" style="left:39px;width:175px">versetzt</i><i class="c" style="left:214px;width:456px">versetzt</i><i class="c" style="left:670px;width:136px"></i><i class="c" style="left:806px;width:117px"></i><i class="c" style="left:923px;width:102px"></i><i class="c n" style="left:1025px;width:45px"></i><i class="c n" style="left:1070px;width:45px"></i><i class="c n" style="left:1115px;width:45px"></i><i class="c n" style="left:1160px;width:45px"></i><i class="c n" style="left:1205px;width:45px"></i><i class="c" style="left:1250px;width:101px;letter-spacing:0.12px">versetzt</i><i class="c" style="left:1351px;width:72px"></i><i class="c" style="left:1423px;width:72px"></i><i class="c" style="left:1495px;width:57px"></i></div>
<div class="r b" style="top:864px"><i class="c n" style="left:0px;width:39px">24</i><i class="c" style="left:39px;width:175px">Abgang</i><i class="c" style="left:214px;width:456px">Abgang</i><i class="c" style="left:670px;width:136px"></i><i class="c" style="left:806px;width:117px"></i><i class="c" style="left:923px;width:102px"></i><i class="c n" style="left:1025px;width:45px"></i><i class="c n" style="left:1070px;width:45px"></i><i class="c n" style="left:1115px;width:45px"></i><i class="c n" style="left:1160px;width:45px"></i><i class="c n" style="left:1205px;width:45px"></i><i class="c" style="left:1250px;width:101px;letter-spacing:0.12px">Abgang</i><i class="c" style="left:1351px;width:72px"></i><i class="c" style="left:1423px;width:72px"></i><i class="c" style="left:1495px;width:57px"></i></div>
<div class="r g" style="top:882px"><i class="c n" style="left:0px;width:39px">25</i><i class="c" style="left:39px;width:175px">Berufsfeld</i><i class="c" style="left:214px;width:456px">Berufsfeld</i><i class="c" style="left:670px;width:136px"></i><i class="c" style="left:806px;width:117px"></i><i class="c" style="left:923px;width:102px"></i><i class="c n" style="left:1025px;width:45px"></i><i class="c n" style="left:1070px;width:45px"></i><i class="c n" style="left:1115px;width:45px"></i><i class="c n" style="left:1160px;width:45px"></i><i class="c n" style="left:1205px;width:45px"></i><i class="c" style="left:1250px;width:101px;letter-spacing:0.12px">Berufsfeld</i><i class="c" style="left:1351px;width:72px"></i><i class="c" style="left:1423px;width:72px"></i><i class="c" style="left:1495px;width:57px"></i></div>
<div class="r b" style="top:900px"><i class="c n" style="left:0px;width:39px">26</i><i class="c" style="left:39px;width:175px">Lob / Preis</i><i class="c" style="left:214px;width:456px">Lob / Preis</i><i class="c" style="left:670px;width:136px"></i><i class="c" style="left:806px;width:117px"></i><i class="c" style="left:923px;width:102px"></i><i class="c n" style="left:1025px;width:45px"></i><i class="c n" style="left:1070px;width:45px"></i><i class="c n" style="left:1115px;width:45px"></i><i class="c n" style="left:1160px;width:45px"></i><i class="c n" style="left:1205px;width:45px"></i><i class="c" style="left:1250px;width:101px;letter-spacing:0.12px">Lob / Preis</i><i class="c" style="left:1351px;width:72px"></i><i class="c" style="left:1423px;width:72px"></i><i class="c" style="left:1495px;width:57px"></i></div>
<div class="r g" style="top:918px"><i class="c n" style="left:0px;width:39px">27</i><i class="c" style="left:39px;width:175px">Durchschnitt 1</i><i class="c" style="left:214px;width:456px">Durchschnitt 1</i><i class="c" style="left:670px;width:136px"></i><i class="c" style="left:806px;width:117px"></i><i class="c" style="left:923px;width:102px"></i><i class="c n" style="left:1025px;width:45px"></i><i class="c n" style="left:1070px;width:45px"></i><i class="c n" style="left:1115px;width:45px"></i><i class="c n" style="left:1160px;width:45px"></i><i class="c n" style="left:1205px;width:45px"></i><i class="c" style="left:1250px;width:101px;letter-spacing:0.12px">Durchschnitt 1</i><i class="c" style="left:1351px;width:72px"></i><i class="c" style="left:1423px;width:72px"></i><i class="c" style="left:1495px;width:57px"></i></div>
</div>
<svg class="abs" style="left:42px;top:431px" width="8" height="5" viewBox="0 0 8 5"><path d="M0 4.3H8L4 0Z" fill="#27455a"/></svg>
<div class="trk" style="left:1568px;top:450px;width:17px;height:488px"></div><div class="cbtn" style="left:1568px;top:416px;height:34px"></div><svg class="abs" style="left:1572px;top:427px" width="11" height="11" viewBox="0 0 11 11" shape-rendering="crispEdges"><g fill="#111"><rect x="0" y="0" width="9" height="1"/><rect x="0" y="0" width="1" height="9"/><rect x="8" y="0" width="1" height="6"/><rect x="0" y="3" width="9" height="1"/><rect x="4" y="0" width="1" height="6"/><rect x="0" y="8" width="3" height="1"/><rect x="2" y="6" width="9" height="1"/><rect x="3" y="7" width="7" height="1"/><rect x="4" y="8" width="5" height="1"/><rect x="5" y="9" width="3" height="1"/><rect x="6" y="10" width="1" height="1"/></g></svg><div class="sbt" style="left:1571px;top:452px;height:15px"></div><svg class="abs" style="left:1572px;top:456px" width="10" height="6" viewBox="0 0 10 6"><path d="M1 5.2L5 1.4L9 5.2" fill="none" stroke="#f4f4f6" stroke-width="1.8"/></svg>

<div class="abs" style="left:1567px;top:450px;width:1px;height:486px;background:#acacb6"></div>
<div class="abs" style="left:1566px;top:419px;width:1px;height:27px;background:#c4c6d0"></div>
<div class="abs" style="left:15px;top:936px;width:1553px;height:2px;background:#ececf5"></div>
<!-- red highlight -->
<div class="abs" style="left:682px;top:682px;width:140px;height:54px;border:2px solid #ff0000;filter:drop-shadow(2px 2px 1.5px rgba(0,0,0,.4))"></div>

</body></html>
